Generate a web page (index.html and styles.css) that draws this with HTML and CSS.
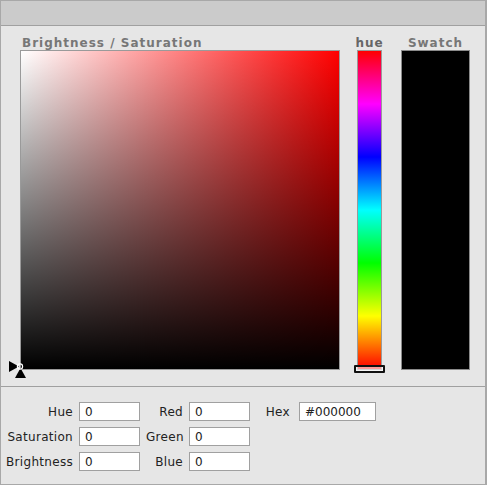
FILE: index.html
```html
<!DOCTYPE html>
<html lang="en">
<head>
  <meta charset="UTF-8">
  <title>Colour Picker</title>
  <link rel="stylesheet" href="styles.css">
</head>
<body>
  <div class="picker">
    <div class="titlebar"></div>

    <div class="main">
      <div class="col col-sv">
        <div class="cap">Brightness / Saturation</div>
        <div class="sv">
          <svg class="sv-cursor" width="24" height="22" viewBox="0 0 24 22">
            <polygon points="0,3 0,14 10,8.5" fill="#000"/>
            <polygon points="6,20 17,20 11.5,10" fill="#000"/>
            <circle cx="11" cy="8.5" r="2.6" fill="none" stroke="#fff" stroke-width="1.2"/>
          </svg>
        </div>
      </div>

      <div class="col col-hue">
        <div class="cap">hue</div>
        <div class="hue">
          <div class="hue-thumb"></div>
        </div>
      </div>

      <div class="col col-swatch">
        <div class="cap">Swatch</div>
        <div class="swatch"></div>
      </div>
    </div>

    <div class="fields">
      <label for="f-hue">Hue</label>
      <input id="f-hue" type="text" value="0">
      <label for="f-red">Red</label>
      <input id="f-red" type="text" value="0">
      <label for="f-hex" class="hex-label">Hex</label>
      <input id="f-hex" type="text" value="#000000">

      <label for="f-sat">Saturation</label>
      <input id="f-sat" type="text" value="0">
      <label for="f-green">Green</label>
      <input id="f-green" type="text" value="0">
      <span></span>
      <span></span>

      <label for="f-bri">Brightness</label>
      <input id="f-bri" type="text" value="0">
      <label for="f-blue">Blue</label>
      <input id="f-blue" type="text" value="0">
      <span></span>
      <span></span>
    </div>
  </div>
</body>
</html>
```

FILE: styles.css
```css
* {
  box-sizing: border-box;
}

body {
  margin: 0;
  background-color: #ffffff;
  font-family: "DejaVu Sans", Verdana, sans-serif;
}

.picker {
  width: 487px;
  background-color: #e6e6e6;
  border: 1px solid #a8a8a8;
  border-right-width: 2px;
}

.titlebar {
  height: 25px;
  background-color: #cbcbcb;
  border-bottom: 1px solid #a0a0a0;
}

.main {
  display: flex;
  align-items: flex-start;
  padding: 10px 0 16px 19px;
}

.col {
  display: flex;
  flex-direction: column;
  align-items: center;
}

.col-sv {
  align-items: flex-start;
}

.col-hue {
  width: 25px;
  margin-left: 17px;
}

.col-swatch {
  width: 69px;
  margin-left: 19px;
}

.cap {
  height: 14px;
  font-size: 12px;
  font-weight: bold;
  line-height: 14px;
  letter-spacing: 1px;
  color: #777777;
  white-space: nowrap;
}

.col-sv .cap {
  margin-left: 2px;
}

.col-hue .cap {
  color: #666666;
}

.sv {
  position: relative;
  width: 320px;
  height: 320px;
  border: 1px solid #9a9a9a;
  background:
    linear-gradient(to top, #000000, rgba(0, 0, 0, 0)),
    linear-gradient(to right, #ffffff, #ff0000);
}

.sv-cursor {
  position: absolute;
  left: -12px;
  bottom: -11px;
}

.hue {
  position: relative;
  width: 25px;
  height: 320px;
  border: 1px solid #9a9a9a;
  background: linear-gradient(to bottom, #ff0000, #ff00ff, #0000ff, #00ffff, #00ff00, #ffff00, #ff0000);
}

.hue-thumb {
  position: absolute;
  left: -4px;
  bottom: -4px;
  width: 31px;
  height: 8px;
  border: 2px solid #111111;
  border-radius: 1px;
  background-color: rgba(255, 255, 255, 0.6);
}

.swatch {
  width: 69px;
  height: 320px;
  border: 1px solid #8a8a8a;
  background-color: #000000;
}

.fields {
  display: grid;
  grid-template-columns: 72px 61px 37px 61px 37px 77px;
  column-gap: 6px;
  row-gap: 6px;
  align-items: center;
  padding: 15px 0 13px 0;
  border-top: 1px solid #a0a0a0;
  font-size: 12px;
  letter-spacing: 0.3px;
  color: #222222;
}

.fields label {
  text-align: right;
  white-space: nowrap;
}

.fields .hex-label {
  padding-right: 3px;
}

.fields input {
  width: 100%;
  height: 19px;
  margin: 0;
  padding: 0 5px;
  border: 1px solid #a0a0a0;
  background-color: #ffffff;
  font-family: "DejaVu Sans", Verdana, sans-serif;
  font-size: 12px;
  color: #222222;
}
```
